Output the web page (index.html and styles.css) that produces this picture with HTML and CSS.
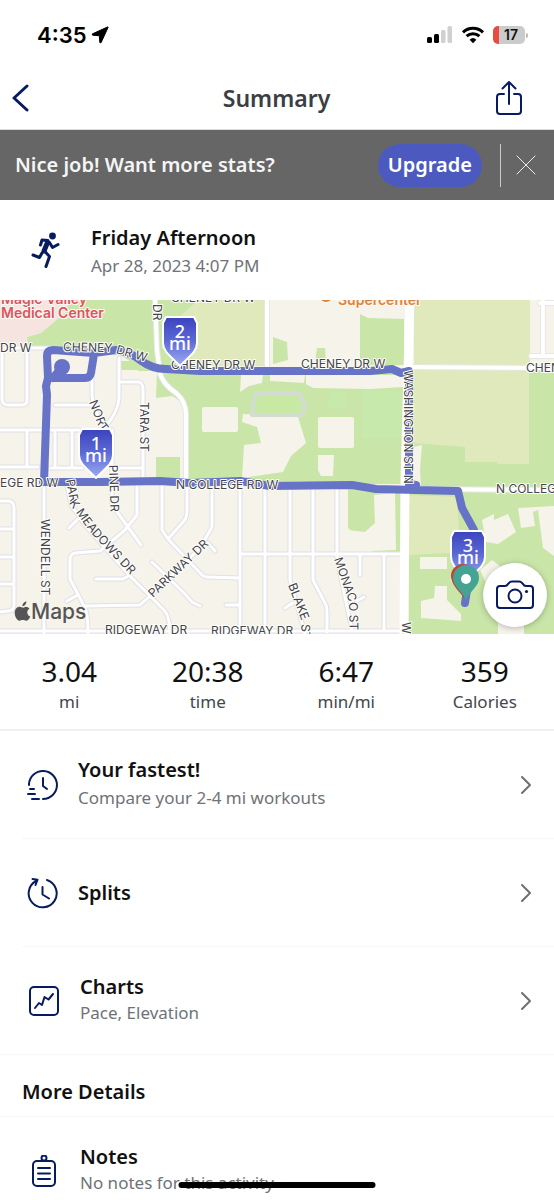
FILE: index.html
```html
<!DOCTYPE html>
<html lang="en">
<head>
<meta charset="utf-8">
<meta name="viewport" content="width=device-width, initial-scale=1">
<title>Summary</title>
<link rel="stylesheet" href="styles.css">
</head>
<body>
<div class="app">
  <div class="status">
    <div class="status-group">
      <span class="clock">4:35</span>
      <svg class="locate" viewBox="0 0 18 18" aria-hidden="true"><path d="M16.500 1 1.200 8 1.600 9.200 8.300 9.700 8.800 16.500 10 16.800 17 1.600z"/></svg>
    </div>
    <div class="status-group">
      <svg class="signal" viewBox="0 0 26 18" aria-hidden="true"><rect x="0" y="11" width="5" height="6" rx="1.500"/><rect x="7" y="8" width="5" height="9" rx="1.500"/><rect class="dim" x="14" y="4" width="4.500" height="13" rx="1.500"/><rect class="dim" x="20.500" y="0" width="4.500" height="17" rx="1.500"/></svg>
      <svg class="wifi" viewBox="0 0 24 18" aria-hidden="true"><path d="M2 6.300a14.500 14.500 0 0 1 20 0M5.600 10.200a9.300 9.300 0 0 1 12.800 0"/><path class="solid" d="M12 17.200 8.600 13.700a5 5 0 0 1 6.800 0z"/></svg>
      <span class="battery">17</span>
    </div>
  </div>

  <header class="header">
    <button class="icon-btn" aria-label="Back"><svg class="back" viewBox="0 0 18 28"><path d="M15 2 2 14l13 12"/></svg></button>
    <h1>Summary</h1>
    <button class="icon-btn" aria-label="Share"><svg class="share" viewBox="0 0 28 36"><path d="M9 14H5q-3 0-3 3v14q0 3 3 3h18q3 0 3-3V17q0-3-3-3h-4M14 24V2M7.500 8.500 14 2l6.500 6.500"/></svg></button>
  </header>

  <section class="banner">
    <p>Nice job! Want more stats?</p>
    <button class="upgrade">Upgrade</button>
    <button class="close" aria-label="Dismiss"><svg viewBox="0 0 20 20"><path d="M1 1l18 18M19 1 1 19"/></svg></button>
  </section>

  <main class="content">
    <section class="activity">
      <svg class="runner" viewBox="0 0 30 36" aria-hidden="true"><circle cx="21.500" cy="4" r="3.400"/><path class="limb" d="M9.500 13 11 8 17 8.500M18.500 10.500l3 5 5.500-3M13.500 19l5 5.500-3.500 10M11 21l-2.500 4.500-6.500-2.500"/><path class="torso" d="M16.500 10.500 13 19"/></svg>
      <div>
        <h2>Friday Afternoon</h2>
        <p>Apr 28, 2023 4:07 PM</p>
      </div>
    </section>

    <section class="map" aria-label="Route map">
      <svg viewBox="0 300 554 334">
        <defs>
          <linearGradient id="shieldFill" x1="0" y1="0" x2="0" y2="1"><stop offset="0" stop-color="#3c43bd"/><stop offset=".45" stop-color="#5966d4"/><stop offset="1" stop-color="#9dabf1"/></linearGradient>
          <path id="shield" d="M-14-49H14Q16-45 17-43V-23C17-14 8-9 0 0-8-9-17-14-17-23V-43Q-16-45-14-49z"/>
          <path id="streets" d="M0 348H50M2 350V400Q3 405 8 405H22Q27 405 27 400V350M55 405H92M92 357V396Q94 415 107 426M119 358V398Q118 412 106 426M120 382H139Q143 383 143 390V478M0 430H80M27 430V466M55 430V466M72 430V466M0 467H38M50 468H82M112 430V505L141 545M115 468H142M0 501H9Q14 502 14 508V605Q14 611 8 611L0 612M0 529H14M0 557H14M0 584H14M44 488V634M0 631H400M67 485 71 505 85 525 130 576 164 610Q170 616 170 634M69 528 78 519M137 485V515L125 530 100 551 75 553Q70 554 70 560V579L84 606Q88 612 88 634M96 579H123L130 575M84 606 140 605 150 596 200 548 212 527V485M67 601 76 596M152 562 185 594 192 602 200 606M208 543 215 551M162 485V530L168 539 202 575Q204 577 207 577L240 578M168 539 184 521Q187 517 187 510V485M240 489V632M265 489V632M290 489V580L305 634M313 489V580L325 603Q327 606 327 611V632M337 489V560L352 630M240 554H403M360 554V575M357 601 364 597M226 605H240M285 608 293 603M384 556V631"/>
          <path id="avenues" d="M155 298 157 350 160 374Q164 385 176 393 186 401 186 415V484M267 298V366M411 367 554 368M543 298V356M531 356H554M540 303H554M410 489 554 490M411 298 408 366 405 480 404 636"/>
          <path id="pCheney" d="M63 351 112 352 150 363"/>
          <path id="pNorth" d="M89 402 99 428 116 450"/>
          <path id="pPark" d="M66 480 71 506 91 533 136 581"/>
          <path id="pParkway" d="M153 598 216 538"/>
          <path id="pBlake" d="M288 585 301 619 302 650"/>
          <path id="pMonaco" d="M334 559 349 602 350 642"/>
        </defs>

        <rect class="land" x="0" y="300" width="554" height="334"/>
        <path class="clinic" d="M0 300H71L66 312 41 333 27 337 26 347H0z"/>
        <path class="park" d="M70 300H156L158 371H138V366L120 355 28 347 27 337 41 333 66 312zM120 361H138V370H120zM158 300H200V369H158zM157 372H404V484H187V418Q185 402 172 396L156 398zM156 457H180V482H156zM273 337 287 342 288 360 273 364zM317 348H325L326 362H315zM360 314 368 318 404 319V365H360zM348 489H403V554H374L348 528zM408 370H554V634H408z"/>
        <path class="field" d="M176 320 198 300H266V366H176zM414 300H530V370H529V464H497V486L465 486V447L414 443zM408 495 457 497 459 532 450 553 408 555z"/>
        <path class="park" d="M465 462H497V487H465z"/>
        <path class="land" d="M531 300H554V366L531 356zM204 407H236Q238 407 238 409V430Q238 432 236 432H204Q202 432 202 430V409Q202 407 204 407zM243 414 298 417 306 443 291 456 283 472 242 478 244 445 261 443 257 427 242 422zM320 417H352Q354 417 354 419V446Q354 448 352 448H320Q318 448 318 446V419Q318 417 320 417zM318 455H334L333 476H321L318 470zM241 375H263L262 383 249 386 240 392zM270 375H305L304 383 270 381zM306 375H403V387L370 389 313 388 306 384zM156 402 172 402 184 415V455H156zM414 447 422 445 420 470 421 485 411 480zM374 495 395 493 396 550 371 551 348 551 348 530 365 532 375 523zM420 557H447V569H420zM435 586H447V600L461 614V621L421 618V601L434 598zM450 580 458 568 470 578 462 592zM482 520 494 514V520L508 514 516 532 498 544 486 542zM518 508 554 506V556L543 548 538 510 533 512 535 526 521 528zM498 620H524V634H498zM480 570 492 560 500 566 490 592z"/>
        <path class="track" d="M256 393H299L305 405 302 415H252V410z"/>
        <path class="meadow" d="M330 392 346 391 345 409 328 407zM362 391H401V438H362z"/>

        <use class="road-edge" href="#streets"/><use class="road-fill" href="#streets"/>
        <use class="avenue-edge" href="#avenues"/><use class="avenue-fill" href="#avenues"/>
        <path class="trunk" d="M410 298 408 370 405 480 404 636"/>

        <path class="route" d="M62 367 53 378M44 482 47 395 46 386 48 378H85Q90 378 91 373L94 354M48 378 47 356Q47 350 53 350L94 353 116 350Q130 352 140 360 152 369 166 369L200 371 320 371 370 371 392 369 401 373 409 371V484L416 485 411 489M43 482 100 482 160 481 190 483 240 481 270 486 352 485 376 489 458 491 462 508 474 530 478 560 467 590 465 603"/>
        <circle class="route-dot" cx="62" cy="367" r="8"/>

        <g class="poi red"><text x="1" y="304">Magic Valley</text><text x="1" y="318">Medical Center</text></g>
        <circle class="poi orange" cx="326" cy="296" r="6"/>
        <text class="poi orange" x="338" y="305">Supercenter</text>
        <g class="label">
          <text x="0" y="352">DR W</text>
          <text><textPath href="#pCheney">CHENEY DR W</textPath></text>
          <text x="171" y="302">CHENEY DR W</text>
          <text x="171" y="369">CHENEY DR W</text>
          <text x="301" y="368">CHENEY DR W</text>
          <text x="526" y="372">CHENEY DR</text>
          <text x="0" y="487">EGE RD W</text>
          <text x="176" y="489">N COLLEGE RD W</text>
          <text x="496" y="493">N COLLEGE RD</text>
          <text x="105" y="634">RIDGEWAY DR</text>
          <text x="211" y="635">RIDGEWAY DR</text>
          <text transform="translate(153 304) rotate(90)">DR</text>
          <text transform="translate(140 402) rotate(90)">TARA ST</text>
          <text transform="translate(109 465) rotate(88)">PINE DR</text>
          <text transform="translate(41 519) rotate(90)">WENDELL ST</text>
          <text transform="translate(404 370) rotate(90)">WASHINGTON ST N</text>
          <text transform="translate(402 622) rotate(90)">W.</text>
          <text><textPath href="#pNorth">NORT</textPath></text>
          <text><textPath href="#pPark">PARK MEADOWS DR</textPath></text>
          <text><textPath href="#pParkway">PARKWAY DR</textPath></text>
          <text><textPath href="#pBlake">BLAKE ST</textPath></text>
          <text><textPath href="#pMonaco">MONACO ST</textPath></text>
        </g>

        <g class="brand">
          <path d="M22.300 606.300c-.2-2.300 1.700-4.600 4.100-5.100.2 2.500-1.600 4.800-4.100 5.100zM26 606.800c1.200 0 2.500.7 3.400 1.900-3.200 1.900-2.700 6.400.9 7.800-1 2.300-2.400 4.300-4.200 4.300-1.200 0-1.700-.7-3.300-.7s-2.100.7-3.300.7c-2.800 0-5.400-5.400-4.700-9.500.5-2.700 2.500-4.500 4.800-4.500 1.500 0 2.400.9 3.600.9 1.200 0 1.400-.9 2.800-.9z"/>
          <text x="31" y="619">Maps</text>
        </g>

        <g class="marker" transform="translate(96 478)"><use href="#shield"/><text y="-28">1</text><text y="-16">mi</text></g>
        <g class="marker" transform="translate(180 366)"><use href="#shield"/><text y="-28">2</text><text y="-16">mi</text></g>
        <g class="marker" transform="translate(468 580)"><use href="#shield"/><text y="-28">3</text><text y="-16">mi</text></g>
        <path class="pin-red" d="M464 598C458 590 451 584 451 576A12 12 0 0 1 475 576Z"/>
        <path class="pin" d="M466 600C461 590 453 586 453 578A13 13 0 0 1 479 578C479 586 471 590 466 600z"/>
        <circle class="pin-eye" cx="466" cy="579" r="5"/>
      </svg>
      <button class="camera" aria-label="Add photo"><svg viewBox="0 0 40 30"><path d="M5 6h5q2 0 3-2l1-1q1-1.500 3-1.500h7q2 0 3 1.500l1 1q1 2 3 2h4q3 0 3 3v16q0 3-3 3H5q-3 0-3-3V9q0-3 3-3z"/><circle cx="20" cy="16" r="6.500"/><circle class="dot" cx="31.500" cy="11.500" r="1.600"/></svg></button>
    </section>

    <dl class="stats">
      <div><dd>3.04</dd><dt>mi</dt></div>
      <div><dd>20:38</dd><dt>time</dt></div>
      <div><dd>6:47</dd><dt>min/mi</dt></div>
      <div><dd>359</dd><dt>Calories</dt></div>
    </dl>

    <nav class="rows">
      <a class="row clock-row" href="#fastest">
        <svg class="row-icon" viewBox="0 0 32 32"><path d="M3 16V15A14 14 0 1 1 17 30M17 9v8l4 3M4 20h4M2 25h7M6 30h7"/></svg>
        <span class="row-text roomy"><strong>Your fastest!</strong><span>Compare your 2-4 mi workouts</span></span>
        <svg class="chevron" viewBox="0 0 12 20"><path d="M2 2l8 8-8 8"/></svg>
      </a>
      <a class="row clock-row" href="#splits">
        <svg class="row-icon" viewBox="0 0 32 32"><path d="M21 3A14 14 0 1 1 10 4M16.500 10v7.500l6.500 4M6.500 2l5 .8L9.500 8"/></svg>
        <span class="row-text"><strong>Splits</strong></span>
        <svg class="chevron" viewBox="0 0 12 20"><path d="M2 2l8 8-8 8"/></svg>
      </a>
      <a class="row" href="#charts">
        <svg class="row-icon" viewBox="0 0 32 32"><rect x="2" y="2" width="28" height="28" rx="4"/><path d="M7 23l4-5 3 2 2.500-8 4 2.500L25 9"/></svg>
        <span class="row-text"><strong>Charts</strong><span>Pace, Elevation</span></span>
        <svg class="chevron" viewBox="0 0 12 20"><path d="M2 2l8 8-8 8"/></svg>
      </a>
    </nav>

    <h2 class="more">More Details</h2>
    <a class="row notes" href="#notes">
      <svg class="row-icon" viewBox="0 0 32 32"><circle cx="16" cy="3" r="2.500"/><rect x="5" y="6" width="22" height="25" rx="4"/><path d="M10 13h12M10 18.500h12M10 24h12"/></svg>
      <span class="row-text"><strong>Notes</strong><span>No notes for this activity</span></span>
    </a>
  </main>
  <div class="home-bar"></div>
</div>
</body>
</html>
```
FILE: styles.css
```css
* { box-sizing: border-box; }
body, h1, h2, p, dl, dd { margin: 0; }
body { background: #fff; color: #111; font-family: "Noto Sans", "Open Sans", sans-serif; }
button { border: 0; padding: 0; background: none; font: inherit; cursor: pointer; }
svg { display: block; flex: none; }
path { stroke-linecap: round; stroke-linejoin: round; }

.app { position: relative; display: flex; flex-direction: column; height: 100vh; overflow: hidden; }

.status { display: flex; justify-content: space-between; align-items: center; height: 70px; flex: none; padding: 0 29px 0 37px; }
.status-group { display: flex; align-items: center; gap: 8px; }
.status-group:first-child { gap: 4px; }
.clock { font: 600 22px/28px Inter, sans-serif; color: #000; }
.locate { width: 18px; height: 18px; stroke: #000; stroke-width: 1; }
.signal { width: 26px; height: 18px; }
.signal .dim { fill: #d0d0d0; }
.wifi { width: 24px; height: 18px; fill: none; stroke: #000; stroke-width: 3; }
.wifi path { stroke-linecap: butt; }
.wifi .solid { fill: #000; stroke: none; }
.battery { position: relative; width: 32px; border-radius: 5px; background: linear-gradient(90deg, #e94b3f 6px, #cbcbcb 6px); font: 600 14px/18px Inter, sans-serif; text-align: center; padding-left: 4px; color: #111; }
.battery::after { content: ""; position: absolute; right: -3px; top: 7px; width: 2px; height: 5px; border-radius: 0 2px 2px 0; background: #bbb; }

.header { display: flex; justify-content: space-between; align-items: center; height: 60px; flex: none; padding: 0 31px 3px 12px; border-bottom: 1px solid #ddd; }
.header h1 { flex: 1; padding-left: 18px; text-align: center; font-size: 23px; line-height: 30px; font-weight: 600; color: #3b3e43; }
.icon-btn { width: 28px; }
.icon-btn svg { fill: none; stroke: #081b60; }
.back { width: 18px; height: 28px; stroke-width: 3; }
.share { width: 28px; height: 36px; stroke-width: 2; }

.banner { display: flex; align-items: center; height: 70px; flex: none; padding: 0 18px 0 15px; background: #666; color: #f5f5f5; font-size: 20px; line-height: 28px; font-weight: 600; }
.banner p { flex: 1; }
.upgrade { height: 43px; padding: 0 10px; border-radius: 22px; background: #4c5ac0; color: #fff; }
.close { height: 43px; margin-left: 18px; padding-left: 15px; border-left: 1px solid #ccc; }
.close svg { width: 20px; height: 20px; fill: none; stroke: #eee; stroke-width: 1; }

.content { flex: 1; min-height: 0; overflow-y: auto; scrollbar-width: none; }
.activity { display: flex; align-items: center; gap: 30px; height: 100px; padding-left: 31px; }
.activity div { padding-top: 4px; }
.runner { width: 30px; height: 36px; fill: #081b60; }
.runner .limb { fill: none; stroke: #081b60; stroke-width: 3; }
.runner .torso { fill: none; stroke: #081b60; stroke-width: 5; }
.activity h2 { font-size: 20px; line-height: 28px; font-weight: 600; }
.activity p { font-size: 17px; line-height: 28px; color: #6f7279; }

.map { position: relative; }
.map > svg { width: 100%; height: auto; }
.land { fill: #f5f3ea; }
.clinic { fill: #f6e4e1; }
.park { fill: #c9e6a8; }
.field { fill: #e0e9bc; }
.meadow { fill: #c7e9ab; }
.track { fill: #c7e9a3; stroke: #d3dcd0; stroke-width: 4; }
.road-edge, .road-fill, .avenue-edge, .avenue-fill, .trunk, .route { fill: none; stroke-linecap: round; }
.road-edge { stroke: #e0e0e8; stroke-width: 5; }
.road-fill { stroke: #fff; stroke-width: 3; }
.avenue-edge { stroke: #e6e8e4; stroke-width: 6; }
.avenue-fill { stroke: #fff; stroke-width: 4; }
.trunk { stroke: #fff; stroke-width: 9; }
.route { stroke: #6773c7; stroke-width: 8; }
.route-dot { fill: #6773c7; }
.label { font: 400 12px Inter, sans-serif; fill: #44444c; stroke: #fffefa; stroke-width: 2; stroke-linejoin: round; paint-order: stroke; }
.poi { font: 600 14px Inter, sans-serif; stroke: #fff8f2; stroke-width: 2; paint-order: stroke; }
.red { fill: #db5560; }
.orange { fill: #dc8338; }
.brand { font: 500 21px Inter, sans-serif; fill: #555; }
.marker use { fill: url(#shieldFill); stroke: #fff; stroke-width: 2; }
.marker text { fill: #fff; font-size: 18px; font-weight: 500; text-anchor: middle; }
.pin { fill: #45a394; }
.pin-red { fill: #bd4639; }
.pin-eye { fill: #fff; }
.camera { position: absolute; right: 7px; bottom: 7px; display: flex; align-items: center; justify-content: center; width: 64px; height: 64px; border-radius: 50%; background: #fff; box-shadow: 0 1px 6px #0004; }
.camera svg { width: 40px; height: 30px; fill: none; stroke: #081b60; stroke-width: 2; }
.camera .dot { fill: #081b60; stroke: none; }

.stats { display: grid; grid-template-columns: repeat(4, 1fr); padding: 18px 0 15px; border-bottom: 2px solid #f0f0f1; text-align: center; }
.stats div { display: flex; flex-direction: column; }
.stats dd { font-size: 28px; line-height: 38px; }
.stats dt { font-size: 17px; line-height: 24px; color: #44474c; }

.row { display: flex; align-items: center; gap: 20px; height: 108px; margin-left: 22px; padding: 0 22px 0 6px; border-bottom: 1px solid #f8f8f9; color: inherit; text-decoration: none; }
.rows .row:last-child { margin-left: 0; padding-left: 28px; }
.rows .clock-row { padding-left: 4px; }
.row-icon { width: 32px; height: 32px; fill: none; stroke: #081b60; stroke-width: 2; }
.row-text { flex: 1; display: flex; flex-direction: column; padding-bottom: 4px; font-size: 17px; line-height: 24px; color: #6f7279; }
.row-text strong { font-size: 20px; line-height: 28px; font-weight: 600; color: #111; }
.row-text strong:only-child { padding-top: 4px; }
.row-text.roomy { gap: 2px; }
.chevron { width: 12px; height: 20px; fill: none; stroke: #6d6f72; stroke-width: 2; }
.more { padding: 23px 22px 10px; border-bottom: 1px solid #f8f8f9; font-size: 20px; line-height: 28px; font-weight: 600; }
.home-bar { position: absolute; left: 50%; bottom: 12px; width: 197px; height: 6px; transform: translateX(-50%); border-radius: 3px; background: #000; }
```
